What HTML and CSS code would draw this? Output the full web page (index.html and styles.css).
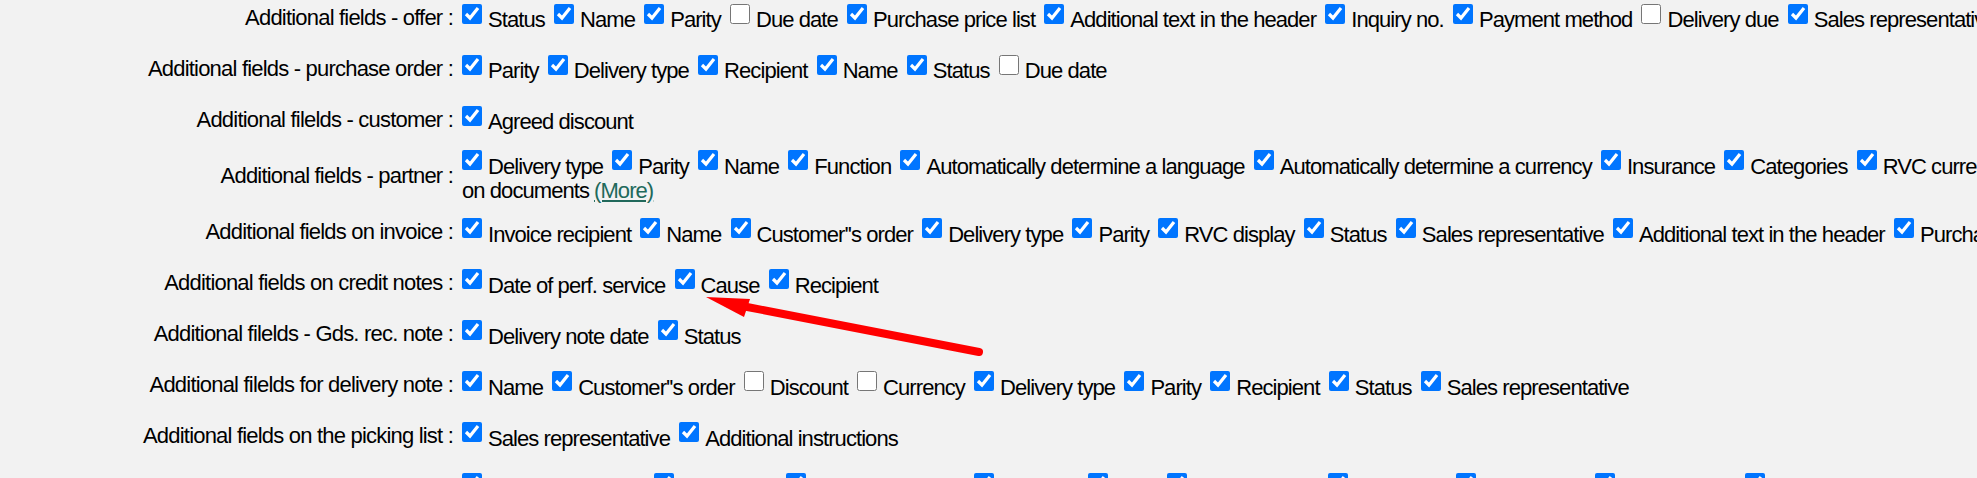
FILE: index.html
```html
<!DOCTYPE html>
<html lang="en">
<head>
<meta charset="utf-8">
<title>Additional fields</title>
<link rel="stylesheet" href="styles.css">
</head>
<body>
<div class="form">
  <div class="row">
    <div class="lbl">Additional fields - offer :</div>
    <div class="val">
      <label class="opt"><input type="checkbox" checked>Status</label>
      <label class="opt"><input type="checkbox" checked>Name</label>
      <label class="opt"><input type="checkbox" checked>Parity</label>
      <label class="opt"><input type="checkbox">Due date</label>
      <label class="opt"><input type="checkbox" checked>Purchase price list</label>
      <label class="opt"><input type="checkbox" checked>Additional text in the header</label>
      <label class="opt"><input type="checkbox" checked>Inquiry no.</label>
      <label class="opt"><input type="checkbox" checked>Payment method</label>
      <label class="opt"><input type="checkbox">Delivery due</label>
      <label class="opt"><input type="checkbox" checked>Sales representative</label>
    </div>
  </div>
  <div class="row">
    <div class="lbl">Additional fields - purchase order :</div>
    <div class="val">
      <label class="opt"><input type="checkbox" checked>Parity</label>
      <label class="opt"><input type="checkbox" checked>Delivery type</label>
      <label class="opt"><input type="checkbox" checked>Recipient</label>
      <label class="opt"><input type="checkbox" checked>Name</label>
      <label class="opt"><input type="checkbox" checked>Status</label>
      <label class="opt"><input type="checkbox">Due date</label>
    </div>
  </div>
  <div class="row">
    <div class="lbl">Additional filelds - customer :</div>
    <div class="val">
      <label class="opt"><input type="checkbox" checked>Agreed discount</label>
    </div>
  </div>
  <div class="row">
    <div class="lbl">Additional fields - partner :</div>
    <div class="val">
      <label class="opt"><input type="checkbox" checked>Delivery type</label>
      <label class="opt"><input type="checkbox" checked>Parity</label>
      <label class="opt"><input type="checkbox" checked>Name</label>
      <label class="opt"><input type="checkbox" checked>Function</label>
      <label class="opt"><input type="checkbox" checked>Automatically determine a language</label>
      <label class="opt"><input type="checkbox" checked>Automatically determine a currency</label>
      <label class="opt"><input type="checkbox" checked>Insurance</label>
      <label class="opt"><input type="checkbox" checked>Categories</label>
      <label class="opt"><input type="checkbox" checked>RVC currency<br>on documents</label><a href="#" class="more">(More)</a>
    </div>
  </div>
  <div class="row">
    <div class="lbl">Additional fields on invoice :</div>
    <div class="val">
      <label class="opt"><input type="checkbox" checked>Invoice recipient</label>
      <label class="opt"><input type="checkbox" checked>Name</label>
      <label class="opt"><input type="checkbox" checked>Customer''s order</label>
      <label class="opt"><input type="checkbox" checked>Delivery type</label>
      <label class="opt"><input type="checkbox" checked>Parity</label>
      <label class="opt"><input type="checkbox" checked>RVC display</label>
      <label class="opt"><input type="checkbox" checked>Status</label>
      <label class="opt"><input type="checkbox" checked>Sales representative</label>
      <label class="opt"><input type="checkbox" checked>Additional text in the header</label>
      <label class="opt"><input type="checkbox" checked>Purchase price list</label>
    </div>
  </div>
  <div class="row">
    <div class="lbl">Additional fields on credit notes :</div>
    <div class="val">
      <label class="opt"><input type="checkbox" checked>Date of perf. service</label>
      <label class="opt"><input type="checkbox" checked>Cause</label>
      <label class="opt"><input type="checkbox" checked>Recipient</label>
    </div>
  </div>
  <div class="row">
    <div class="lbl">Additional filelds - Gds. rec. note :</div>
    <div class="val">
      <label class="opt"><input type="checkbox" checked>Delivery note date</label>
      <label class="opt"><input type="checkbox" checked>Status</label>
    </div>
  </div>
  <div class="row">
    <div class="lbl">Additional filelds for delivery note :</div>
    <div class="val">
      <label class="opt"><input type="checkbox" checked>Name</label>
      <label class="opt"><input type="checkbox" checked>Customer''s order</label>
      <label class="opt"><input type="checkbox">Discount</label>
      <label class="opt"><input type="checkbox">Currency</label>
      <label class="opt"><input type="checkbox" checked>Delivery type</label>
      <label class="opt"><input type="checkbox" checked>Parity</label>
      <label class="opt"><input type="checkbox" checked>Recipient</label>
      <label class="opt"><input type="checkbox" checked>Status</label>
      <label class="opt"><input type="checkbox" checked>Sales representative</label>
    </div>
  </div>
  <div class="row">
    <div class="lbl">Additional fields on the picking list :</div>
    <div class="val">
      <label class="opt"><input type="checkbox" checked>Sales representative</label>
      <label class="opt"><input type="checkbox" checked>Additional instructions</label>
    </div>
  </div>
  <div class="row">
    <div class="lbl">Additional fields - order :</div>
    <div class="val">
      <label class="opt"><input type="checkbox" checked>Customer''s order</label>
      <label class="opt"><input type="checkbox" checked>Categories</label>
      <label class="opt"><input type="checkbox" checked>Payment method</label>
      <label class="opt"><input type="checkbox" checked>Discount</label>
      <label class="opt"><input type="checkbox" checked>Type</label>
      <label class="opt"><input type="checkbox" checked>Order number</label>
      <label class="opt"><input type="checkbox" checked>Reference</label>
      <label class="opt"><input type="checkbox" checked>Warehouse</label>
      <label class="opt"><input type="checkbox" checked>Delivery type</label>
      <label class="opt"><input type="checkbox" checked>Status</label>
    </div>
  </div>
</div>
<svg class="arrow" width="1977" height="478" viewBox="0 0 1977 478" aria-hidden="true">
  <line x1="979" y1="352" x2="742" y2="306" stroke="#ff0000" stroke-width="8" stroke-linecap="round"/>
  <polygon points="706,297 750,299 744,317" fill="#ff0000"/>
</svg>
</body>
</html>
```

FILE: styles.css
```css
html, body {
  margin: 0;
  padding: 0;
  background: #f2f2f2;
  overflow: hidden;
}

body {
  position: relative;
  width: 1977px;
  height: 478px;
  font-family: "Liberation Sans", Arial, sans-serif;
  font-size: 22px;
  letter-spacing: -0.93px;
  color: #000;
}

.form {
  margin-top: -11px;
}

.row {
  display: grid;
  grid-template-columns: 453px minmax(0, 1fr);
  column-gap: 9px;
  align-items: center;
  min-height: 51px;
}

.lbl {
  text-align: right;
  line-height: 25px;
  white-space: nowrap;
  padding-top: 5px;
  letter-spacing: -0.8px;
}

.val {
  white-space: nowrap;
  line-height: 24px;
  padding: 8px 0 1px;
}

.opt + .opt {
  margin-left: 4px;
}

.opt input {
  width: 20px;
  height: 20px;
  margin: 0 6px 0 0;
  vertical-align: 3.5px;
}

.more {
  color: #21695b;
  margin-left: 5px;
}

.arrow {
  position: absolute;
  left: 0;
  top: 0;
  pointer-events: none;
}
```
